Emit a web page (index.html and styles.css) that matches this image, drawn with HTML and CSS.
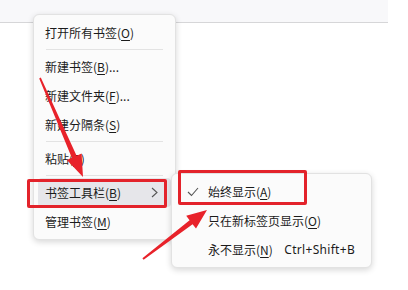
FILE: index.html
```html
<!DOCTYPE html>
<html lang="zh-CN">
<head>
<meta charset="utf-8">
<link rel="stylesheet" href="styles.css">
</head>
<body>
<div class="stage">
  <div class="topbar"></div>

  <div class="menu main-menu">
    <div class="item">打开所有书签(<u>O</u>)</div>
    <div class="sep"></div>
    <div class="item">新建书签(<u>B</u>)...</div>
    <div class="item">新建文件夹(<u>F</u>)...</div>
    <div class="item">新建分隔条(<u>S</u>)</div>
    <div class="sep"></div>
    <div class="item">粘贴(<u>P</u>)</div>
    <div class="sep"></div>
    <div class="item active">书签工具栏(<u>B</u>)
      <svg class="chev" width="7" height="11" viewBox="0 0 7 11"><polyline points="1,1 6,5.5 1,10" fill="none" stroke="#555" stroke-width="1.1"/></svg>
    </div>
    <div class="item">管理书签(<u>M</u>)</div>
  </div>

  <div class="menu sub-menu">
    <div class="item sub-item">
      <svg class="check" width="12" height="10" viewBox="0 0 12 10"><polyline points="1,5 4.5,8.5 11,1" fill="none" stroke="#555" stroke-width="1.1"/></svg>
      始终显示(<u>A</u>)
    </div>
    <div class="item sub-item">只在新标签页显示(<u>O</u>)</div>
    <div class="item sub-item">永不显示(<u>N</u>)<span class="shortcut">Ctrl+Shift+B</span></div>
  </div>

  <div class="mark mark-1"></div>
  <div class="mark mark-2"></div>

  <svg class="arrows" width="408" height="290" viewBox="0 0 408 290">
    <polygon fill="#e8222a" points="40.8,77.6 76.6,155.8 81.6,153.6 83,177 66.9,160 71.8,157.8 39.2,78.4"/>
    <polygon fill="#e8222a" points="143.6,259.7 192.6,224.2 196,228.6 207,210 186.2,215.8 189.6,220.2 142.4,258.3"/>
  </svg>
</div>
</body>
</html>
```

FILE: styles.css
```css
html, body {
  margin: 0;
  padding: 0;
  background: #ffffff;
}

.stage {
  position: relative;
  width: 408px;
  height: 290px;
  overflow: hidden;
  font-family: "Noto Sans CJK SC", "Noto Sans", sans-serif;
  font-size: 12px;
  color: #1b1b1b;
}

.topbar {
  width: 388px;
  height: 22px;
  background: #f8f8fa;
  border-bottom: 1px solid #d6d6d8;
}

.menu {
  position: absolute;
  background: #fbfbfb;
  border: 1px solid #e2e2e2;
  border-radius: 6px;
  box-shadow: 0 2px 6px rgba(0, 0, 0, 0.16);
  padding: 3px 4px;
  box-sizing: border-box;
}

.main-menu {
  left: 33px;
  top: 14px;
  width: 143px;
  height: 226px;
}

.sub-menu {
  left: 171px;
  top: 173px;
  width: 201px;
  height: 95px;
}

.item {
  position: relative;
  display: flex;
  align-items: center;
  height: 29px;
  padding-left: 7px;
  border-radius: 4px;
  white-space: nowrap;
}

.item u {
  text-decoration: underline;
  text-underline-offset: 2px;
}

.item.active {
  background: #e6e6ea;
}

.chev {
  position: absolute;
  right: 13px;
  top: 9px;
}

.sep {
  height: 1px;
  background: #e3e3e3;
  margin: 2px 8px 2px 8px;
}

.sub-item {
  padding-left: 32px;
  padding-right: 12px;
}

.check {
  position: absolute;
  left: 11px;
  top: 10px;
}

.shortcut {
  margin-left: auto;
  font-family: "Noto Sans", "Open Sans", sans-serif;
  font-size: 12px;
  letter-spacing: 0.3px;
}

.mark {
  position: absolute;
  border: 3px solid #e3232b;
  border-radius: 2px;
  box-sizing: border-box;
}

.mark-1 {
  left: 27px;
  top: 179px;
  width: 140px;
  height: 29px;
}

.mark-2 {
  left: 178px;
  top: 170px;
  width: 129px;
  height: 35px;
}

.arrows {
  position: absolute;
  left: 0;
  top: 0;
}
```
